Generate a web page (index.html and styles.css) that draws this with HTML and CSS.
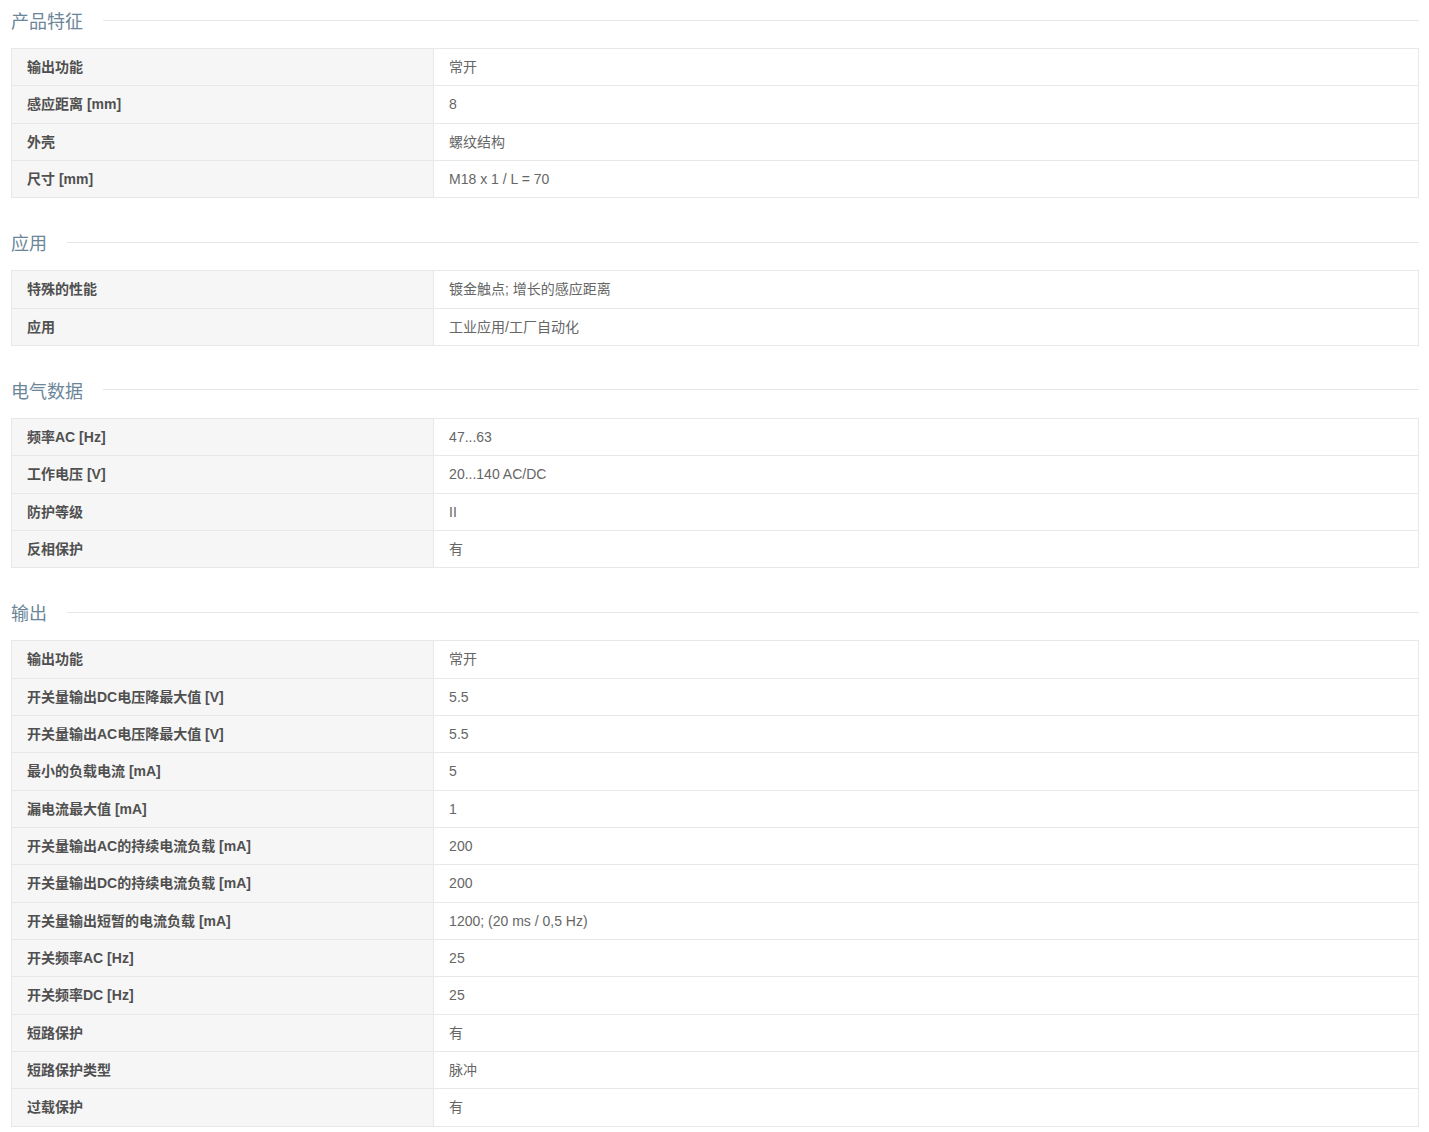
FILE: index.html
```html
<!DOCTYPE html>
<html lang="zh-CN">
<head>
    <meta charset="UTF-8">
    <title>产品参数</title>
    <link rel="stylesheet" href="styles.css">
</head>
<body>
    <div class="specs">
        <div class="spec-title"><span>产品特征</span></div>
        <table class="spec-table">
            <tr><th>输出功能</th><td>常开</td></tr>
            <tr><th>感应距离 [mm]</th><td>8</td></tr>
            <tr><th>外壳</th><td>螺纹结构</td></tr>
            <tr><th>尺寸 [mm]</th><td>M18 x 1 / L = 70</td></tr>
        </table>

        <div class="spec-title"><span>应用</span></div>
        <table class="spec-table">
            <tr><th>特殊的性能</th><td>镀金触点; 增长的感应距离</td></tr>
            <tr><th>应用</th><td>工业应用/工厂自动化</td></tr>
        </table>

        <div class="spec-title"><span>电气数据</span></div>
        <table class="spec-table">
            <tr><th>频率AC [Hz]</th><td>47...63</td></tr>
            <tr><th>工作电压 [V]</th><td>20...140 AC/DC</td></tr>
            <tr><th>防护等级</th><td>II</td></tr>
            <tr><th>反相保护</th><td>有</td></tr>
        </table>

        <div class="spec-title"><span>输出</span></div>
        <table class="spec-table">
            <tr><th>输出功能</th><td>常开</td></tr>
            <tr><th>开关量输出DC电压降最大值 [V]</th><td>5.5</td></tr>
            <tr><th>开关量输出AC电压降最大值 [V]</th><td>5.5</td></tr>
            <tr><th>最小的负载电流 [mA]</th><td>5</td></tr>
            <tr><th>漏电流最大值 [mA]</th><td>1</td></tr>
            <tr><th>开关量输出AC的持续电流负载 [mA]</th><td>200</td></tr>
            <tr><th>开关量输出DC的持续电流负载 [mA]</th><td>200</td></tr>
            <tr><th>开关量输出短暂的电流负载 [mA]</th><td>1200; (20 ms / 0,5 Hz)</td></tr>
            <tr><th>开关频率AC [Hz]</th><td>25</td></tr>
            <tr><th>开关频率DC [Hz]</th><td>25</td></tr>
            <tr><th>短路保护</th><td>有</td></tr>
            <tr><th>短路保护类型</th><td>脉冲</td></tr>
            <tr><th>过载保护</th><td>有</td></tr>
        </table>
    </div>
</body>
</html>
```

FILE: styles.css
```css
* {
    margin: 0;
    padding: 0;
    box-sizing: border-box;
}

body {
    font-family: "Liberation Sans", "Noto Sans CJK SC", sans-serif;
    background: #fff;
    color: #666;
}

.specs {
    margin: 0 10px 0 11px;
}

.spec-title {
    display: flex;
    align-items: center;
    height: 40px;
    margin-top: 24px;
    margin-bottom: 8px;
    font-size: 18px;
    color: #6c8699;
}

.spec-title:first-child {
    margin-top: 0;
}

.spec-title::after {
    content: "";
    flex: 1;
    height: 1px;
    margin-left: 20px;
    background: #e6e6e6;
}

.spec-table {
    width: 100%;
    border-collapse: collapse;
    font-size: 14px;
    border: 1px solid #e8e8e8;
}

.spec-table th,
.spec-table td {
    padding: 8px 16px 8px 15px;
    line-height: 20.33px;
    border: 1px solid #e8e8e8;
    text-align: left;
    vertical-align: middle;
}

.spec-table th {
    width: 30%;
    background: #f6f6f6;
    color: #505050;
    font-weight: 700;
}

.spec-table td {
    color: #666;
}
```
